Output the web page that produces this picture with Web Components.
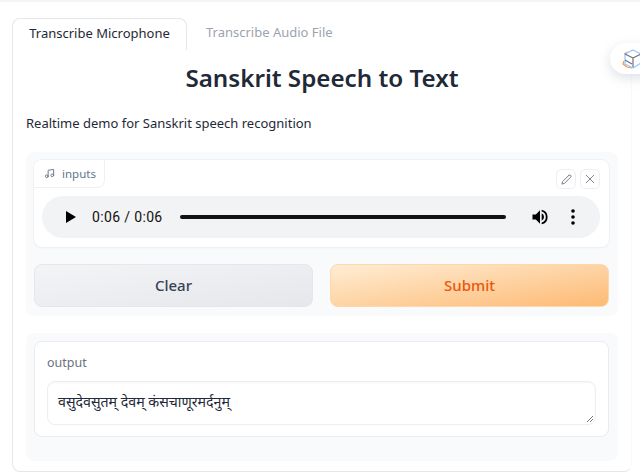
<!DOCTYPE html>
<html>
<head>
<meta charset="utf-8">
<style>
html, body { margin: 0; height: 473px; overflow: hidden; background: #fff; }
body { font-family: "Noto Sans", "Lato", sans-serif; color: #1f2937; }
</style>
</head>
<body>
<template id="demo-tabs-tpl">
  <style>
    :host { display: block; border-top: 2px solid #f4f4f5; padding: 16px 8px 0 12px; height: 455px; box-sizing: content-box; }
    .bar { display: flex; height: 31px; }
    .tab { font-size: 13px; line-height: 29px; white-space: nowrap; color: #9ca3af; }
    .tab.active { color: #1f2937; width: 175px; box-sizing: border-box; border: 1px solid #e5e7eb; border-bottom: 0; border-radius: 8px 8px 0 0; background: #fff; text-align: center; margin-bottom: -1px; position: relative; z-index: 1; }
    .tab.idle { padding-left: 19px; }
    .panel { border: 1px solid #e5e7eb; border-top-color: transparent; border-right-color: #fafafa; border-radius: 0 0 8px 8px; height: 423px; box-sizing: border-box; padding: 0 13px; }
  </style>
  <div class="bar">
    <div class="tab active">Transcribe Microphone</div>
    <div class="tab idle">Transcribe Audio File</div>
  </div>
  <div class="panel"><slot></slot></div>
</template>

<template id="demo-header-tpl">
  <style>
    :host { display: block; }
    h1 { margin: 0; padding-top: 11px; font-size: 24.2px; line-height: 34px; font-weight: 600; text-align: center; color: #1f2937; }
    p { margin: 18px 0 0; font-size: 13px; line-height: 20px; color: #1f2937; }
  </style>
  <h1><slot name="title"></slot></h1>
  <p><slot name="desc"></slot></p>
</template>

<template id="form-group-tpl">
  <style>
    :host { display: block; background: #f9fafb; border-radius: 8px; padding: 8px 9px 9px 8px; }
  </style>
  <slot></slot>
</template>

<template id="audio-input-tpl">
  <style>
    :host { display: block; position: relative; background: #fff; border-radius: 8px; height: 87px; box-shadow: 0 0 0 1px #eef0f3, 0 1px 2px rgba(0,0,0,.05); }
    .label { position: absolute; left: 0; top: 0; height: 28px; box-sizing: border-box; display: flex; align-items: center; gap: 7px; padding: 0 8px 0 10px; font-size: 11.5px; background: #fff; border-right: 1px solid #eef0f3; border-bottom: 1px solid #eef0f3; border-radius: 8px 0 8px 0; }
    .label span { color: #64748b; }
    .tools { position: absolute; right: 9px; top: 9px; display: flex; gap: 4px; }
    .tools div { width: 20px; height: 20px; box-sizing: border-box; border: 1px solid #eceef1; border-radius: 5px; display: flex; align-items: center; justify-content: center; }
    .player { position: absolute; left: 8px; right: 9px; top: 36px; height: 42px; background: #f1f3f4; border-radius: 21px; display: flex; align-items: center; color: #111; font: 14px "Roboto", "Liberation Sans", sans-serif; }
    .play { margin-left: 24px; width: 0; height: 0; border-left: 10px solid #000; border-top: 6px solid transparent; border-bottom: 6px solid transparent; }
    .time { margin-left: 16px; width: 70px; white-space: nowrap; letter-spacing: .35px; }
    .track { margin-left: 18px; width: 326px; height: 4px; border-radius: 2px; background: #111; }
    .vol { margin-left: 24px; display: block; }
    .dots { margin-left: 21px; display: block; }
  </style>
  <div class="label">
    <svg width="11" height="11" viewBox="0 0 24 24" fill="none" stroke="#6b7280" stroke-width="2" stroke-linecap="round" stroke-linejoin="round"><path d="M9 18V5l12-2v13"/><circle cx="6" cy="18" r="3"/><circle cx="18" cy="16" r="3"/></svg>
    <span><slot></slot></span>
  </div>
  <div class="tools">
    <div><svg width="11" height="11" viewBox="0 0 24 24" fill="none" stroke="#6b7280" stroke-width="2" stroke-linecap="round" stroke-linejoin="round"><path d="M17 3a2.83 2.83 0 1 1 4 4L7.500 20.500 2 22l1.500-5.500L17 3z"/></svg></div>
    <div><svg width="10" height="10" viewBox="0 0 24 24" fill="none" stroke="#6b7280" stroke-width="2" stroke-linecap="round"><path d="M3 3l18 18M21 3L3 21"/></svg></div>
  </div>
  <div class="player">
    <div class="play"></div>
    <div class="time">0:06 / 0:06</div>
    <div class="track"></div>
    <svg class="vol" width="20" height="20" viewBox="0 0 24 24" fill="#000"><path d="M3 9v6h4l5 5V4L7 9H3z"/><path d="M14 7.500a5 5 0 0 1 0 9z"/><path d="M14 3.200v2.100a7 7 0 0 1 0 13.400v2.100a9 9 0 0 0 0-17.600z"/></svg>
    <svg class="dots" width="4" height="16" viewBox="0 0 4 16" fill="#000"><circle cx="2" cy="2" r="1.800"/><circle cx="2" cy="8" r="1.800"/><circle cx="2" cy="14" r="1.800"/></svg>
  </div>
</template>

<template id="action-button-tpl">
  <style>
    :host { display: block; flex: 1; height: 43px; box-sizing: border-box; border-radius: 8px; border: 1px solid #e5e7eb; font-size: 15px; font-weight: 500; line-height: 41px; text-align: center; color: #374151; background: linear-gradient(to bottom right, #f3f4f6, #e5e7eb); }
    :host([primary]) { color: #ea580c; border-color: #fed7aa; background: linear-gradient(to bottom right, #ffedd5, #fdba74); }
  </style>
  <slot></slot>
</template>

<template id="output-text-tpl">
  <style>
    :host { display: block; background: #fff; border: 1px solid #e9ebef; border-radius: 8px; height: 96px; box-sizing: border-box; padding: 13px 12px; }
    .label { font-size: 12.5px; line-height: 16px; color: #6b7280; }
    .box { margin-top: 10px; height: 44px; box-sizing: border-box; border: 1px solid #eceef1; border-radius: 8px; padding: 0 10px; line-height: 40px; font-size: 14.2px; color: #1f2937; position: relative; box-shadow: inset 0 1px 2px rgba(0,0,0,.04); }
    svg { position: absolute; right: 1px; bottom: 1px; }
  </style>
  <div class="label"><slot name="label"></slot></div>
  <div class="box">
    <slot name="value"></slot>
    <svg width="8" height="8" viewBox="0 0 8 8" stroke="#777" stroke-width="1" fill="none"><path d="M1 7l6-6M4 7l3-3"/></svg>
  </div>
</template>

<template id="side-pill-tpl">
  <style>
    :host { position: absolute; left: 610px; top: 43px; width: 60px; height: 31px; background: #fff; border-radius: 16px; box-shadow: 0 4px 12px rgba(100,116,139,.22); }
    svg { position: absolute; left: 11px; top: 5px; }
  </style>
  <svg width="26" height="22" viewBox="0 0 26 22" fill="none" stroke-width="1.200" stroke-linejoin="round">
    <path d="M3 13l-1 3 4 3 5 1" stroke="#fb923c"/>
    <path d="M3 6l4-2" stroke="#fb923c"/>
    <path d="M4 6l8-4 8 4v9l-8 5-8-4z" stroke="#93c5fd"/>
    <path d="M4 6l8 4 8-4M12 10v9M4 12l7 4" stroke="#6b7280"/>
  </svg>
</template>

<script>
function tpl(name) {
  return class extends HTMLElement {
    constructor() {
      super();
      this.attachShadow({ mode: 'open' });
      this.shadowRoot.appendChild(document.getElementById(name + '-tpl').content.cloneNode(true));
    }
  };
}
class ButtonRow extends HTMLElement {
  constructor() {
    super();
    this.attachShadow({ mode: 'open' });
    this.shadowRoot.innerHTML = '<style>:host{display:flex;gap:17px;margin-top:17px}</style><slot></slot>';
  }
}
customElements.define('demo-tabs', tpl('demo-tabs'));
customElements.define('demo-header', tpl('demo-header'));
customElements.define('form-group', tpl('form-group'));
customElements.define('audio-input', tpl('audio-input'));
customElements.define('action-button', tpl('action-button'));
customElements.define('output-text', tpl('output-text'));
customElements.define('side-pill', tpl('side-pill'));
customElements.define('button-row', ButtonRow);
</script>

<demo-tabs>
  <demo-header>
    <span slot="title">Sanskrit Speech to Text</span>
    <span slot="desc">Realtime demo for Sanskrit speech recognition</span>
  </demo-header>
  <form-group style="margin-top:19px">
    <audio-input>inputs</audio-input>
    <button-row>
      <action-button>Clear</action-button>
      <action-button primary>Submit</action-button>
    </button-row>
  </form-group>
  <form-group style="margin-top:17px;height:128px;box-sizing:border-box">
    <output-text>
      <span slot="label">output</span>
      <span slot="value" style="font-family:'Noto Sans','Noto Sans Devanagari','Lohit Devanagari',sans-serif">वसुदेवसुतम् देवम् कंसचाणूरमर्दनुम्</span>
    </output-text>
  </form-group>
</demo-tabs>
<side-pill></side-pill>
</body>
</html>
